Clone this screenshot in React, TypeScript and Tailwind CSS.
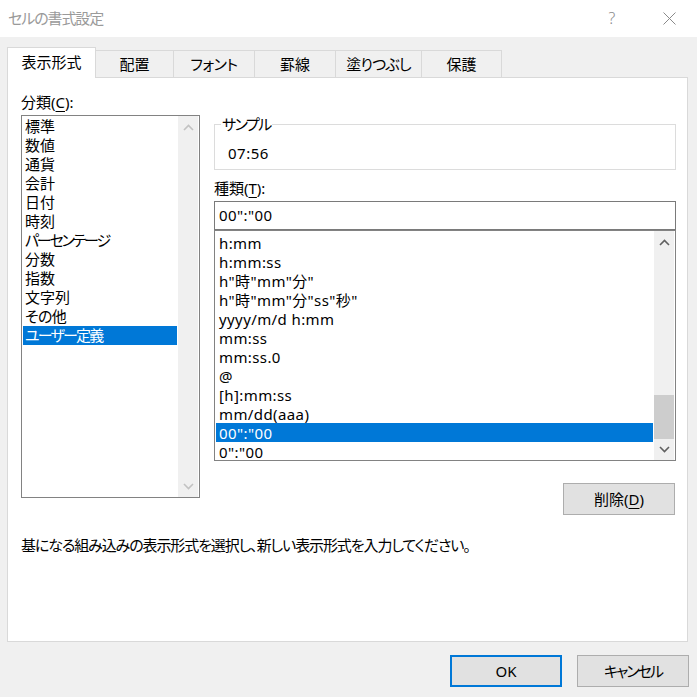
import type { ReactNode } from 'react';

const categories = [
  { label: '標準', tr: '' },
  { label: '数値', tr: '' },
  { label: '通貨', tr: '' },
  { label: '会計', tr: '' },
  { label: '日付', tr: '' },
  { label: '時刻', tr: '' },
  { label: 'パーセンテージ', tr: 'tracking-[-2.2px]' },
  { label: '分数', tr: '' },
  { label: '指数', tr: '' },
  { label: '文字列', tr: '' },
  { label: 'その他', tr: 'tracking-[-0.6px]' },
  { label: 'ユーザー定義', tr: 'tracking-[-1.8px]' },
];

const formats = [
  'h:mm',
  'h:mm:ss',
  'h"時"mm"分"',
  'h"時"mm"分"ss"秒"',
  'yyyy/m/d h:mm',
  'mm:ss',
  'mm:ss.0',
  '@',
  '[h]:mm:ss',
  'mm/dd(aaa)',
  '00":"00',
  '0":"00',
];

const tabs = [
  { label: '配置', w: 'w-[78px]', tr: '' },
  { label: 'フォント', w: 'w-[81px]', tr: 'tracking-[-0.5px]' },
  { label: '罫線', w: 'w-[81px]', tr: '' },
  { label: '塗りつぶし', w: 'w-[86px]', tr: 'tracking-[-0.8px]' },
  { label: '保護', w: 'w-[80px]', tr: '' },
];

function Chevron({ up, color }: { up?: boolean; color: string }) {
  return (
    <svg width="11" height="7" viewBox="0 0 11 7" fill="none">
      <path d={up ? 'M1 6 L5.5 1.5 L10 6' : 'M1 1 L5.5 5.5 L10 1'} stroke={color} strokeWidth="1.6" />
    </svg>
  );
}

function Scrollbar({ enabled }: { enabled?: boolean }) {
  const color = enabled ? '#606060' : '#c2c2c2';
  return (
    <div className="w-[20px] mr-px bg-[#f0f0f0] flex flex-col py-px">
      <div className="h-[20px] flex items-center justify-center">
        <Chevron up color={color} />
      </div>
      <div className="flex-1 flex flex-col justify-end">
        {enabled && <div className="h-[44px] bg-[#cdcdcd]" />}
      </div>
      <div className="h-[20px] flex items-center justify-center">
        <Chevron color={color} />
      </div>
    </div>
  );
}

function Mnemonic({ children }: { children: ReactNode }) {
  return <span className="underline underline-offset-[3px] decoration-1">{children}</span>;
}

export default function App() {
  return (
    <div className="w-[697px] h-[697px] overflow-hidden bg-[#f0f0f0] text-black text-[15px] leading-[19px] font-['Noto_Sans','Noto_Sans_CJK_JP',sans-serif] [font-feature-settings:'palt']">
      {/* title bar */}
      <div className="h-[37px] bg-white flex items-center pl-[8px] pr-[18px]">
        <span className="text-[#9a9a9a] tracking-[-1.1px]">セルの書式設定</span>
        <span className="ml-auto w-[20px] text-center text-[#8a8a8a] text-[16px] font-light">?</span>
        <span className="ml-[37px] w-[20px] flex justify-center">
          <svg width="13" height="13" viewBox="0 0 13 13">
            <path d="M0.5 0.5 L12.5 12.5 M12.5 0.5 L0.5 12.5" stroke="#8a8a8a" strokeWidth="1" />
          </svg>
        </span>
      </div>

      {/* tabs */}
      <div className="mt-[10px] pl-[7px] h-[30px] flex items-end">
        <div className="relative z-10 w-[89px] h-[31px] -mb-px bg-white border border-b-0 border-[#d9d9d9] flex items-center justify-center pb-px">
          表示形式
        </div>
        {tabs.map(t => (
          <div key={t.label} className={`${t.w} ${t.tr} h-[27px] border-t border-r border-[#d9d9d9] flex items-center justify-center`}>
            {t.label}
          </div>
        ))}
      </div>

      {/* panel */}
      <div className="ml-[7px] w-[681px] h-[565px] bg-white border border-[#d9d9d9] pl-[13px] pt-[15px] flex flex-col">
        <div className="flex items-start gap-[14px]">
          <div className="w-[179px]">
            <div className="h-[19px]">分類(<Mnemonic>C</Mnemonic>):</div>
            <div className="mt-[3px] h-[383px] border border-[#828282] flex">
              <div className="flex-1 p-px">
                {categories.map((c, i) => (
                  <div
                    key={c.label}
                    className={`h-[19px] pl-[2px] whitespace-nowrap ${c.tr} ${i === categories.length - 1 ? 'bg-[#0078d7] text-white' : ''}`}
                  >
                    {c.label}
                  </div>
                ))}
              </div>
              <Scrollbar />
            </div>
          </div>

          <div className="w-[462px] mt-[22px] flex flex-col">
            <fieldset className="border border-[#dcdcdc] pt-[10px] pb-[6px]">
              <legend className="ml-[6px] px-[1px] h-[19px] tracking-[-1.5px]">サンプル</legend>
              <div className="h-[19px] pl-[13px] tracking-[0.5px]">07:56</div>
            </fieldset>

            <div className="mt-[9px] h-[19px]">種類(<Mnemonic>T</Mnemonic>):</div>
            <div className="mt-[3px] h-[29px] border border-[#7a7a7a] flex items-center pl-[4px] tracking-[0.4px]">00&quot;:&quot;00</div>

            <div className="h-[231px] border border-[#828282] flex">
              <div className="flex-1 px-px pt-[2px]">
                {formats.map((f, i) => (
                  <div
                    key={f}
                    className={`h-[19px] pl-[3px] pt-px whitespace-nowrap tracking-[0.4px] ${i === 10 ? 'bg-[#0078d7] text-white' : ''}`}
                  >
                    {f}
                  </div>
                ))}
              </div>
              <Scrollbar enabled />
            </div>

            <button className="mt-[22px] self-end mr-px w-[112px] h-[32px] bg-[#e1e1e1] border border-[#adadad]">
              削除(<Mnemonic>D</Mnemonic>)
            </button>
          </div>
        </div>

        <p className="mt-[21px] h-[19px] tracking-[-1.1px]">
          基になる組み込みの表示形式を選択し、新しい表示形式を入力してください。
        </p>
      </div>

      {/* footer */}
      <div className="mt-[13px] pr-[8px] flex justify-end gap-[15px]">
        <button className="w-[112px] h-[32px] bg-[#e1e1e1] border-2 border-[#0078d7]">OK</button>
        <button className="w-[112px] h-[32px] bg-[#e1e1e1] border border-[#adadad] tracking-[-2px]">キャンセル</button>
      </div>
    </div>
  );
}
